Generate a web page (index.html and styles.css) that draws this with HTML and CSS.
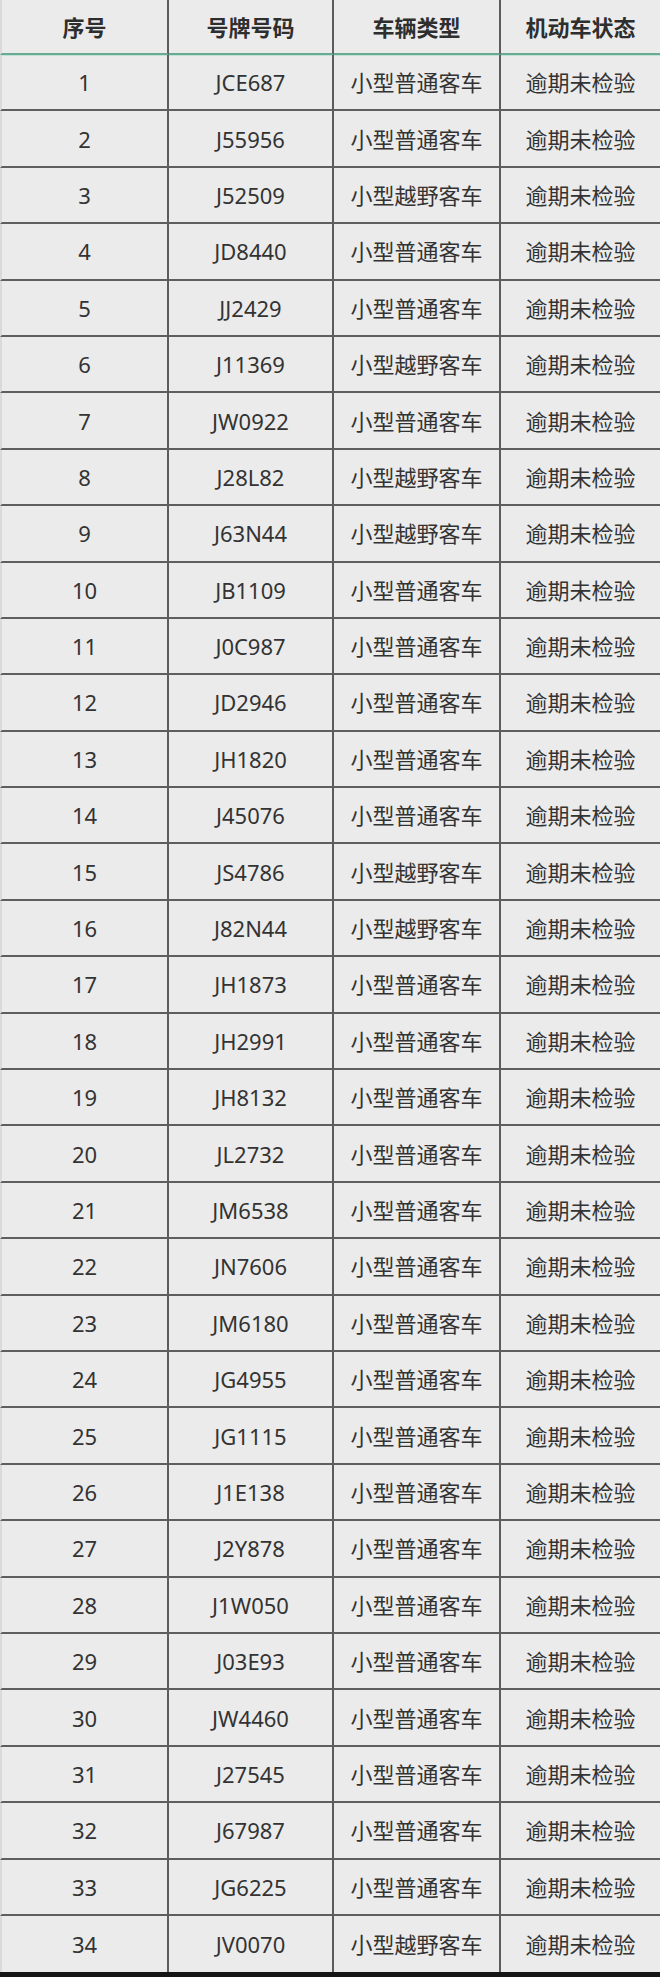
FILE: index.html
```html
<!DOCTYPE html>
<html lang="zh-CN">
<head>
<meta charset="utf-8">
<title>逾期未检验车辆</title>
<link rel="stylesheet" href="styles.css">
</head>
<body>
<table class="grid">
  <colgroup>
    <col class="c1"><col class="c2"><col class="c3"><col class="c4">
  </colgroup>
  <thead>
    <tr><th>序号</th><th>号牌号码</th><th>车辆类型</th><th>机动车状态</th></tr>
  </thead>
  <tbody>
    <tr><td>1</td><td>JCE687</td><td>小型普通客车</td><td>逾期未检验</td></tr>
    <tr><td>2</td><td>J55956</td><td>小型普通客车</td><td>逾期未检验</td></tr>
    <tr><td>3</td><td>J52509</td><td>小型越野客车</td><td>逾期未检验</td></tr>
    <tr><td>4</td><td>JD8440</td><td>小型普通客车</td><td>逾期未检验</td></tr>
    <tr><td>5</td><td>JJ2429</td><td>小型普通客车</td><td>逾期未检验</td></tr>
    <tr><td>6</td><td>J11369</td><td>小型越野客车</td><td>逾期未检验</td></tr>
    <tr><td>7</td><td>JW0922</td><td>小型普通客车</td><td>逾期未检验</td></tr>
    <tr><td>8</td><td>J28L82</td><td>小型越野客车</td><td>逾期未检验</td></tr>
    <tr><td>9</td><td>J63N44</td><td>小型越野客车</td><td>逾期未检验</td></tr>
    <tr><td>10</td><td>JB1109</td><td>小型普通客车</td><td>逾期未检验</td></tr>
    <tr><td>11</td><td>J0C987</td><td>小型普通客车</td><td>逾期未检验</td></tr>
    <tr><td>12</td><td>JD2946</td><td>小型普通客车</td><td>逾期未检验</td></tr>
    <tr><td>13</td><td>JH1820</td><td>小型普通客车</td><td>逾期未检验</td></tr>
    <tr><td>14</td><td>J45076</td><td>小型普通客车</td><td>逾期未检验</td></tr>
    <tr><td>15</td><td>JS4786</td><td>小型越野客车</td><td>逾期未检验</td></tr>
    <tr><td>16</td><td>J82N44</td><td>小型越野客车</td><td>逾期未检验</td></tr>
    <tr><td>17</td><td>JH1873</td><td>小型普通客车</td><td>逾期未检验</td></tr>
    <tr><td>18</td><td>JH2991</td><td>小型普通客车</td><td>逾期未检验</td></tr>
    <tr><td>19</td><td>JH8132</td><td>小型普通客车</td><td>逾期未检验</td></tr>
    <tr><td>20</td><td>JL2732</td><td>小型普通客车</td><td>逾期未检验</td></tr>
    <tr><td>21</td><td>JM6538</td><td>小型普通客车</td><td>逾期未检验</td></tr>
    <tr><td>22</td><td>JN7606</td><td>小型普通客车</td><td>逾期未检验</td></tr>
    <tr><td>23</td><td>JM6180</td><td>小型普通客车</td><td>逾期未检验</td></tr>
    <tr><td>24</td><td>JG4955</td><td>小型普通客车</td><td>逾期未检验</td></tr>
    <tr><td>25</td><td>JG1115</td><td>小型普通客车</td><td>逾期未检验</td></tr>
    <tr><td>26</td><td>J1E138</td><td>小型普通客车</td><td>逾期未检验</td></tr>
    <tr><td>27</td><td>J2Y878</td><td>小型普通客车</td><td>逾期未检验</td></tr>
    <tr><td>28</td><td>J1W050</td><td>小型普通客车</td><td>逾期未检验</td></tr>
    <tr><td>29</td><td>J03E93</td><td>小型普通客车</td><td>逾期未检验</td></tr>
    <tr><td>30</td><td>JW4460</td><td>小型普通客车</td><td>逾期未检验</td></tr>
    <tr><td>31</td><td>J27545</td><td>小型普通客车</td><td>逾期未检验</td></tr>
    <tr><td>32</td><td>J67987</td><td>小型普通客车</td><td>逾期未检验</td></tr>
    <tr><td>33</td><td>JG6225</td><td>小型普通客车</td><td>逾期未检验</td></tr>
    <tr class="last"><td>34</td><td>JV0070</td><td>小型越野客车</td><td>逾期未检验</td></tr>
  </tbody>
</table>
</body>
</html>
```

FILE: styles.css
```css
html {
  background: #151515;
}
body {
  margin: 0;
  background: #ebebeb;
  font-family: "Noto Sans", "Noto Sans CJK SC", sans-serif;
  color: #333333;
}
.grid {
  width: 660px;
  table-layout: fixed;
  border-collapse: separate;
  border-spacing: 0;
  background: #ebebeb;
}
.c1 { width: 169px; }
.c2 { width: 165px; }
.c3 { width: 167px; }
.c4 { width: 159px; }

.grid th,
.grid td {
  padding: 0;
  text-align: center;
  vertical-align: middle;
  font-size: 22px;
  line-height: 26px;
  border-right: 2px solid #5c5c5c;
  white-space: nowrap;
}
.grid th:last-child,
.grid td:last-child {
  border-right: none;
}
.grid th:first-child,
.grid td:first-child {
  border-left: 2px solid #dadada;
}
.grid th {
  height: 53px;
  font-weight: 700;
  color: #2e2e2e;
  border-bottom: 2px solid #6aa992;
  box-shadow: 0 1px 0 #bfe3d4;
}
.grid td {
  height: 54.4px;
  border-bottom: 2px solid #5e5e5e;
  font-weight: 400;
}
.grid tr.last td {
  border-bottom: none;
  height: 56px;
}
```
